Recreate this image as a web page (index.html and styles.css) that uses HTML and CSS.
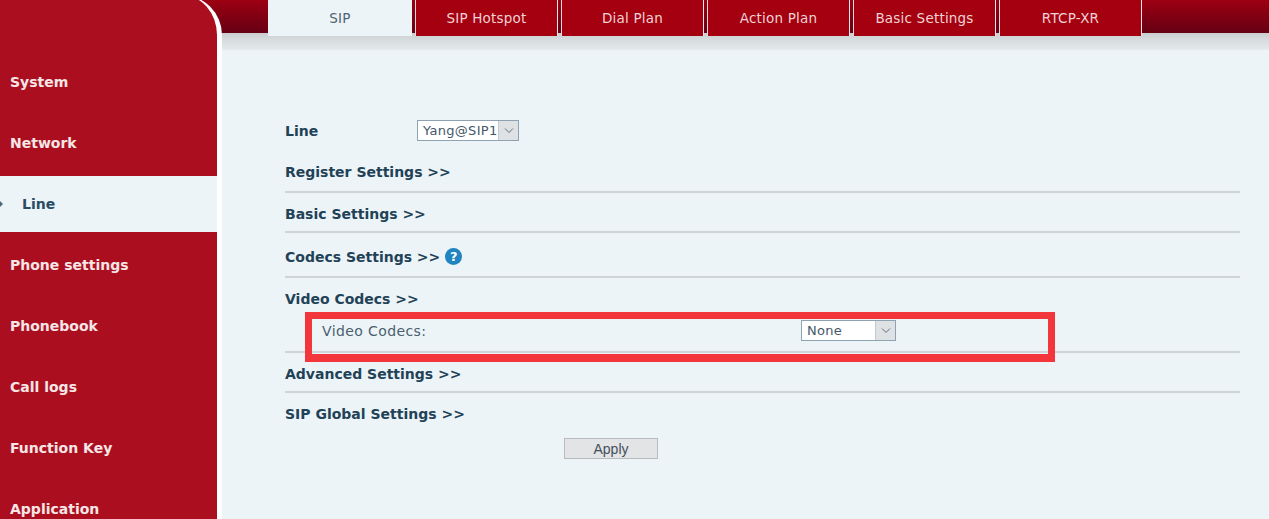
FILE: index.html
```html
<!DOCTYPE html>
<html lang="en">
<head>
<meta charset="utf-8">
<title>Line - SIP</title>
<link rel="stylesheet" href="styles.css">
</head>
<body>
<div class="shell">
  <nav class="sidebar">
    <a class="nav-item">System</a>
    <a class="nav-item">Network</a>
    <a class="nav-item active"><svg class="nav-mark" width="4" height="8" viewBox="0 0 4 8"><path d="M0 1 L3 4 L0 7 Z" fill="#4a6a7a"/></svg>Line</a>
    <a class="nav-item">Phone settings</a>
    <a class="nav-item">Phonebook</a>
    <a class="nav-item">Call logs</a>
    <a class="nav-item">Function Key</a>
    <a class="nav-item">Application</a>
  </nav>
  <main class="main">
    <div class="tabs">
      <a class="tab current">SIP</a>
      <a class="tab">SIP Hotspot</a>
      <a class="tab">Dial Plan</a>
      <a class="tab">Action Plan</a>
      <a class="tab">Basic Settings</a>
      <a class="tab">RTCP-XR</a>
    </div>
    <div class="panel">
      <div class="line-row">
        <span class="line-label">Line</span>
        <div class="select select-line"><span class="select-value">Yang@SIP1</span><span class="select-arrow"><svg width="10" height="7" viewBox="0 0 10 7"><path d="M1 1.5 L5 5.5 L9 1.5" fill="none" stroke="#5f6e7a" stroke-width="1"/></svg></span></div>
      </div>
      <div class="section s-register">Register Settings &gt;&gt;</div>
      <div class="section s-basic">Basic Settings &gt;&gt;</div>
      <div class="section s-codecs">Codecs Settings &gt;&gt;<span class="help">?</span></div>
      <div class="section s-video">Video Codecs &gt;&gt;</div>
      <div class="field-row">
        <span class="field-label">Video Codecs:</span>
        <div class="select select-none"><span class="select-value">None</span><span class="select-arrow"><svg width="10" height="7" viewBox="0 0 10 7"><path d="M1 1.5 L5 5.5 L9 1.5" fill="none" stroke="#5f6e7a" stroke-width="1"/></svg></span></div>
        <div class="highlight"></div>
      </div>
      <div class="section s-advanced">Advanced Settings &gt;&gt;</div>
      <div class="section s-global">SIP Global Settings &gt;&gt;</div>
      <button class="apply" type="button">Apply</button>
    </div>
  </main>
</div>
</body>
</html>
```
FILE: styles.css
```css
html, body {
  margin: 0;
  height: 100%;
  overflow: hidden;
}
body {
  background: #edf4f7;
  font-family: "DejaVu Sans", Tahoma, sans-serif;
}
.shell {
  display: flex;
  height: 519px;
  overflow: hidden;
  background:
    linear-gradient(#9c0012 0, #660014 33px, #c9cdd0 33px, #d2d6d9 37px, #e4eaed 50px) no-repeat 0 0 / 100% 50px,
    #edf4f7;
}
.sidebar {
  flex: none;
  width: 217px;
  height: 560px;
  margin-top: -5px;
  padding-top: 59px;
  box-sizing: content-box;
  display: flex;
  flex-direction: column;
  gap: 5px;
  background: #ab0e1f;
  border-right: 5px solid #fff;
  border-top-right-radius: 40px;
}
.nav-item {
  height: 56px;
  flex: none;
  display: flex;
  align-items: center;
  padding-left: 10px;
  font-size: 14px;
  font-weight: 700;
  color: #f6e6e6;
}
.nav-item.active {
  background: #edf4f7;
  color: #274c63;
  padding-left: 0;
}
.nav-mark {
  width: 4px;
  margin-right: 18px;
}
.main {
  flex: 1;
  min-width: 0;
}
.tabs {
  display: flex;
  gap: 3px;
  height: 36px;
  margin-left: 46px;
}
.tab {
  flex: none;
  box-sizing: border-box;
  width: 143px;
  display: flex;
  align-items: center;
  justify-content: center;
  padding-bottom: 1px;
  background: #a50010;
  border-left: 1px solid #e8d8da;
  border-right: 1px solid #f2e6e8;
  font-size: 13.5px;
  letter-spacing: .2px;
  color: #f0d2d4;
}
.tab.current {
  width: 144px;
  background: #edf4f7;
  border-color: #edf4f7;
  color: #4d6373;
}
.panel {
  margin-left: 63px;
  margin-right: 29px;
  padding-top: 84px;
  color: #1f4257;
}
.line-row {
  display: flex;
  align-items: center;
  height: 21px;
  margin-bottom: 11px;
}
.line-label {
  width: 132px;
  font-size: 14px;
  font-weight: 700;
}
.select {
  box-sizing: border-box;
  display: flex;
  height: 21px;
  background: #fff;
  border: 1px solid #8fa2b2;
  font-size: 13px;
  letter-spacing: .3px;
  color: #44586a;
}
.select-line { width: 102px; }
.select-none { width: 95px; }
.select-value {
  flex: 1;
  min-width: 0;
  padding-left: 5px;
  line-height: 19px;
  white-space: nowrap;
}
.select-arrow {
  flex: none;
  width: 19px;
  display: flex;
  align-items: center;
  justify-content: center;
  background: #dfe2e5;
  border-left: 1px solid #c2cad0;
}
.section {
  box-sizing: border-box;
  display: flex;
  align-items: center;
  font-size: 14px;
  font-weight: 700;
  border-bottom: 2px solid #cfd4d7;
}
.s-register { height: 41px; }
.s-basic { height: 40px; padding-top: 4px; }
.s-codecs { height: 45px; padding-top: 4px; }
.s-video { height: 40px; border-bottom: 0; padding-top: 2px; }
.s-advanced { height: 40px; padding-top: 4px; }
.s-global { height: 42px; border-bottom: 0; }
.help {
  width: 17px;
  height: 17px;
  margin-left: 5px;
  border-radius: 50%;
  background: #1f84bf;
  color: #fff;
  font-size: 13px;
  line-height: 17px;
  text-align: center;
}
.field-row {
  position: relative;
  box-sizing: border-box;
  display: flex;
  align-items: center;
  height: 35px;
  padding: 0 0 8px 37px;
  border-bottom: 2px solid #cfd4d7;
}
.field-label {
  width: 479px;
  font-size: 14px;
  letter-spacing: .4px;
  color: #4a5f70;
}
.highlight {
  position: absolute;
  left: 20px;
  top: -6px;
  width: 750px;
  height: 50px;
  box-sizing: border-box;
  border: 7px solid #f3363c;
  border-bottom-width: 8px;
}
.apply {
  display: block;
  box-sizing: border-box;
  width: 94px;
  height: 21px;
  margin: 3px 0 0 279px;
  padding: 0;
  background: #e2e4e6;
  border: 1px solid #b8bcc0;
  font-family: "Liberation Sans", Arial, sans-serif;
  font-size: 14px;
  color: #44505a;
}
```
